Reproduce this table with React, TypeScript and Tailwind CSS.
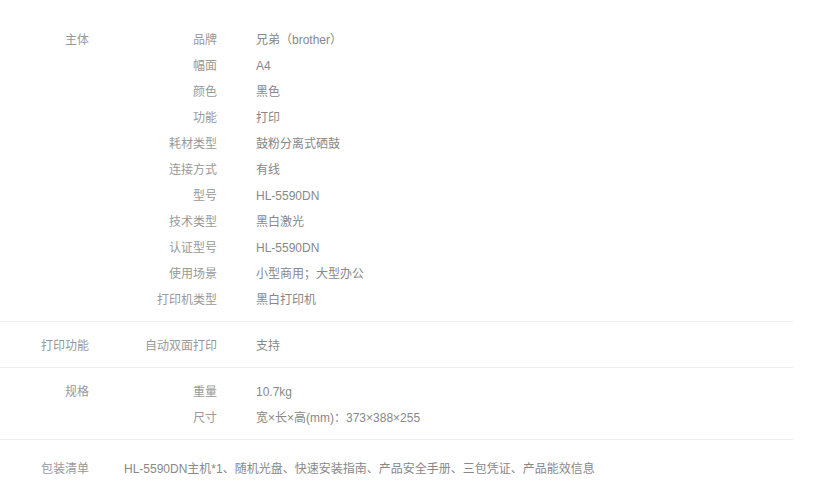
import React from "react";

interface Spec {
    title: string;
    rows: [string, string][];
}

const specs: Spec[] = [
    {
        title: "主体",
        rows: [
            ["品牌", "兄弟（brother）"],
            ["幅面", "A4"],
            ["颜色", "黑色"],
            ["功能", "打印"],
            ["耗材类型", "鼓粉分离式硒鼓"],
            ["连接方式", "有线"],
            ["型号", "HL-5590DN"],
            ["技术类型", "黑白激光"],
            ["认证型号", "HL-5590DN"],
            ["使用场景", "小型商用；大型办公"],
            ["打印机类型", "黑白打印机"],
        ],
    },
    {
        title: "打印功能",
        rows: [["自动双面打印", "支持"]],
    },
    {
        title: "规格",
        rows: [
            ["重量", "10.7kg"],
            ["尺寸", "宽×长×高(mm)：373×388×255"],
        ],
    },
];

const font = { fontFamily: '"Liberation Sans", "Noto Sans CJK SC", sans-serif' };

export default function App() {
    return (
        <div className="w-[824px] h-[500px] bg-white text-[12px] text-[#999]" style={font}>
            <div className="w-[793px] pt-[16px]">
                {specs.map((s) => (
                    <div key={s.title} className="flex border-b border-[#eee] pt-[11px] pb-[8px]">
                        {/* 분류 */}
                        <div className="w-[89px] text-right leading-[26px]">{s.title}</div>
                        <div className="flex flex-col">
                            {s.rows.map(([k, v]) => (
                                <div key={k} className="flex leading-[26px]">
                                    <div className="w-[128px] text-right">{k}</div>
                                    <div className="ml-[39px] text-[#888]">{v}</div>
                                </div>
                            ))}
                        </div>
                    </div>
                ))}

                {/* 包装清单 */}
                <div className="flex pt-[16px] leading-[26px]">
                    <div className="w-[89px] text-right">包装清单</div>
                    <div className="ml-[35px] text-[#888]">
                        HL-5590DN主机*1、随机光盘、快速安装指南、产品安全手册、三包凭证、产品能效信息
                    </div>
                </div>
            </div>
        </div>
    );
}
